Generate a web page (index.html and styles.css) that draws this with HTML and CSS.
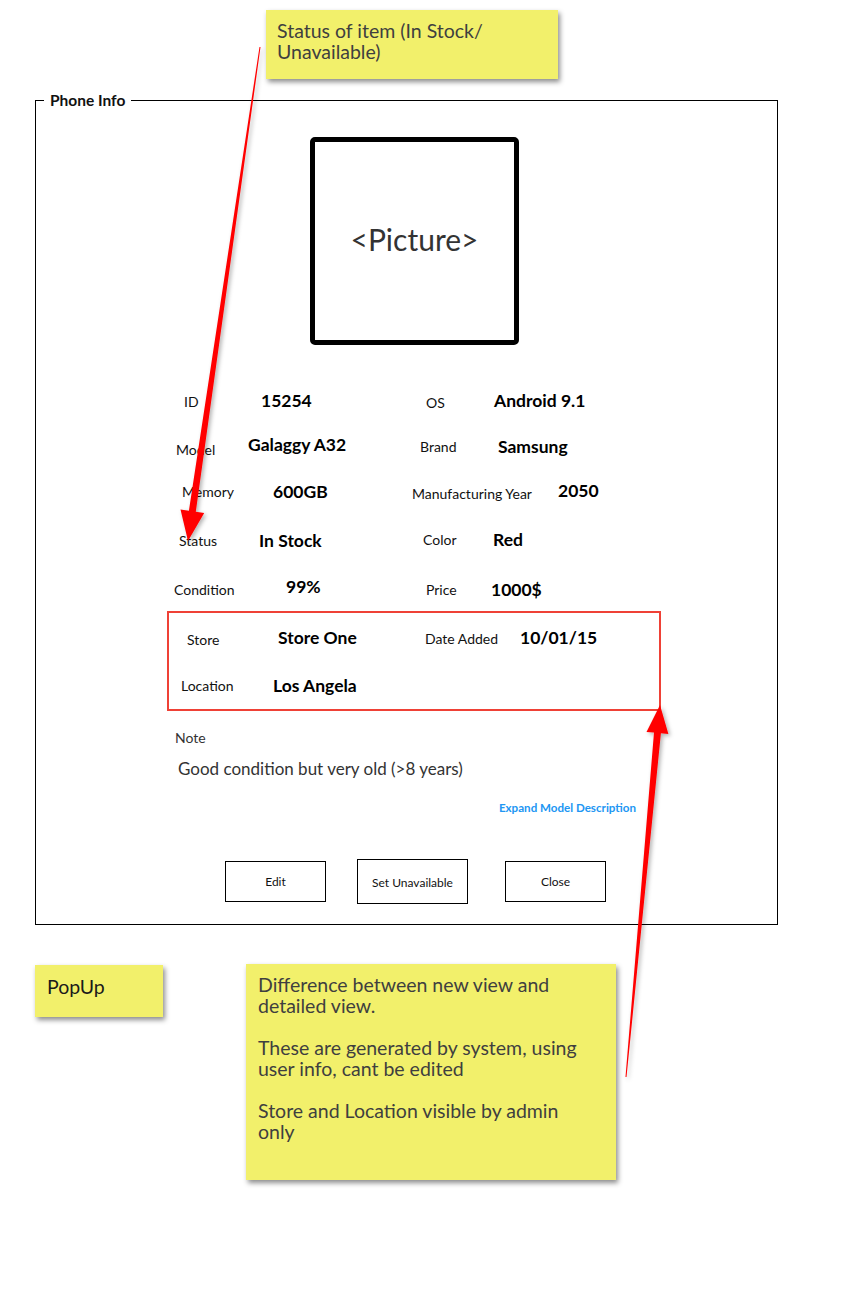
FILE: index.html
```html
<!DOCTYPE html>
<html>
<head>
<meta charset="utf-8">
<link rel="stylesheet" href="styles.css">
</head>
<body>
<div class="canvas">
  <div class="note note-top">Status of item (In Stock/<br>Unavailable)</div>

  <div class="panel">
    <span class="legend">Phone Info</span>
    <div class="picture">&lt;Picture&gt;</div>

    <div class="fields">
      <span class="lbl dx10 dy1">ID</span><span class="val dx13">15254</span>
      <span class="lbl dx14 dy2">OS</span><span class="val dx3">Android 9.1</span>

      <span class="lbl dx2 dy3">Model</span><span class="val dym2">Galaggy A32</span>
      <span class="lbl dx8">Brand</span><span class="val dx7">Samsung</span>

      <span class="lbl dx8">Memory</span><span class="val dx25">600GB</span>
      <span class="lbl dy2">Manufacturing Year</span><span class="val dx67 dym1">2050</span>

      <span class="lbl dx5 dy1">Status</span><span class="val dx11 dy1">In Stock</span>
      <span class="lbl dx11">Color</span><span class="val dx2">Red</span>

      <span class="lbl dy1">Condition</span><span class="val dx38 dym2">99%</span>
      <span class="lbl dx14 dy1">Price</span><span class="val dy1">1000$</span>
    </div>

    <div class="admin">
      <span class="lbl dx6 dy2">Store</span><span class="val dx5">Store One</span>
      <span class="lbl dy1">Date Added</span><span class="val">10/01/15</span>

      <span class="lbl">Location</span><span class="val">Los Angela</span>
      <span></span><span></span>
    </div>

    <div class="note-label">Note</div>
    <div class="note-text">Good condition but very old (&gt;8 years)</div>
    <div class="expand-row"><a class="expand">Expand Model Description</a></div>

    <div class="buttons">
      <div class="btn btn-edit">Edit</div>
      <div class="btn btn-unavail">Set Unavailable</div>
      <div class="btn btn-close">Close</div>
    </div>
  </div>

  <div class="bottom">
    <div class="note note-popup">PopUp</div>
    <div class="note note-diff">Difference between new view and<br>detailed view.<br><br>These are generated by system, using<br>user info, cant be edited<br><br>Store and Location visible by admin<br>only</div>
  </div>

  <svg class="arrows" width="853" height="1290" viewBox="0 0 853 1290">
    <defs>
      <filter id="sh" x="-50%" y="-10%" width="200%" height="120%">
        <feDropShadow dx="2" dy="2" stdDeviation="2" flood-color="#000" flood-opacity="0.3"/>
      </filter>
    </defs>
    <polygon filter="url(#sh)" fill="#ff0000" points="259.5,46.9 188.9,510.8 180.5,509.6 188,541 204.2,513 195.8,511.8 260.5,47.1"/>
    <polygon filter="url(#sh)" fill="#ff0000" points="625.5,1077 654,732.6 646.5,731.9 660,705 668.4,733.9 660.9,733.2 626.5,1077.1"/>
  </svg>
</div>
</body>
</html>
```

FILE: styles.css
```css
* { box-sizing: border-box; }
html, body { margin: 0; padding: 0; background: #fff; }
body { font-family: Lato, "Liberation Sans", sans-serif; color: #111; }

.canvas {
  position: relative;
  width: 853px;
  height: 1290px;
  padding-top: 100px;
  padding-left: 35px;
}

/* sticky notes */
.note {
  background: #f2f06b;
  box-shadow: 2px 3px 5px rgba(0, 0, 0, 0.45);
  color: #3f3f3f;
  font-size: 19.5px;
  line-height: 21px;
}
.note-top {
  position: absolute;
  left: 266px;
  top: 10px;
  width: 292px;
  height: 69px;
  padding: 10px 11px;
}
.bottom {
  display: flex;
  align-items: flex-start;
  margin-top: 39px;
  gap: 83px;
}
.note-popup {
  width: 128px;
  height: 52px;
  padding: 11px 12px;
  margin-top: 1px;
  color: #1a1a1a;
}
.note-diff {
  width: 370px;
  height: 216px;
  padding: 10px 12px;
}

/* panel */
.panel {
  position: relative;
  width: 743px;
  height: 825px;
  border: 1px solid #000;
}
.legend {
  position: absolute;
  left: 8px;
  top: -10px;
  padding: 0 6px;
  background: #fff;
  font-weight: 700;
  font-size: 15.5px;
  line-height: 18px;
  color: #111;
}
.picture {
  margin: 36px 0 0 274px;
  width: 209px;
  height: 208px;
  border: 5px solid #000;
  border-radius: 5px;
  display: flex;
  align-items: center;
  justify-content: center;
  font-size: 30px;
  color: #333;
  padding-bottom: 4px;
}

.lbl, .val { white-space: nowrap; position: relative; }
.lbl { font-size: 14px; color: #111; }
.val { font-size: 17.5px; font-weight: 700; color: #000; }

.fields {
  display: grid;
  grid-template-columns: 74px 164px 79px 1fr;
  grid-template-rows: 46px 46px 45px 51px 46px;
  align-items: center;
  margin: 32px 0 0 138px;
  width: 480px;
}
.admin {
  display: grid;
  grid-template-columns: 92px 152px 95px 1fr;
  grid-template-rows: 48px 48px;
  align-items: center;
  margin-left: 131px;
  width: 494px;
  height: 100px;
  border: 2px solid #ef4136;
  padding-left: 12px;
}

/* small offsets of the hand-placed wireframe labels */
.dx2 { left: 2px; } .dx3 { left: 3px; } .dx5 { left: 5px; } .dx6 { left: 6px; }
.dx7 { left: 7px; } .dx8 { left: 8px; } .dx10 { left: 10px; } .dx11 { left: 11px; }
.dx13 { left: 13px; } .dx14 { left: 14px; } .dx25 { left: 25px; } .dx38 { left: 38px; }
.dx67 { left: 67px; }
.dy1 { top: 1px; } .dy2 { top: 2px; } .dy3 { top: 3px; }
.dym1 { top: -1px; } .dym2 { top: -2px; }

.note-label {
  margin: 18px 0 0 139px;
  font-size: 14px;
  line-height: 17px;
  color: #333;
}
.note-text {
  margin: 12px 0 0 142px;
  font-size: 17px;
  line-height: 21px;
  color: #333;
}
.expand-row {
  display: flex;
  justify-content: flex-end;
  width: 600px;
  margin-top: 22px;
}
.expand {
  font-size: 11.6px;
  line-height: 14px;
  font-weight: 700;
  color: #2196f3;
}
.buttons {
  display: flex;
  align-items: center;
  margin: 44px 0 0 189px;
}
.btn {
  border: 1px solid #000;
  display: flex;
  align-items: center;
  justify-content: center;
  font-size: 12px;
  color: #111;
}
.btn-edit { width: 101px; height: 41px; }
.btn-unavail { width: 111px; height: 45px; margin-left: 31px; padding-top: 2px; }
.btn-close { width: 101px; height: 41px; margin-left: 37px; }

.arrows {
  position: absolute;
  left: 0;
  top: 0;
  pointer-events: none;
}
```
